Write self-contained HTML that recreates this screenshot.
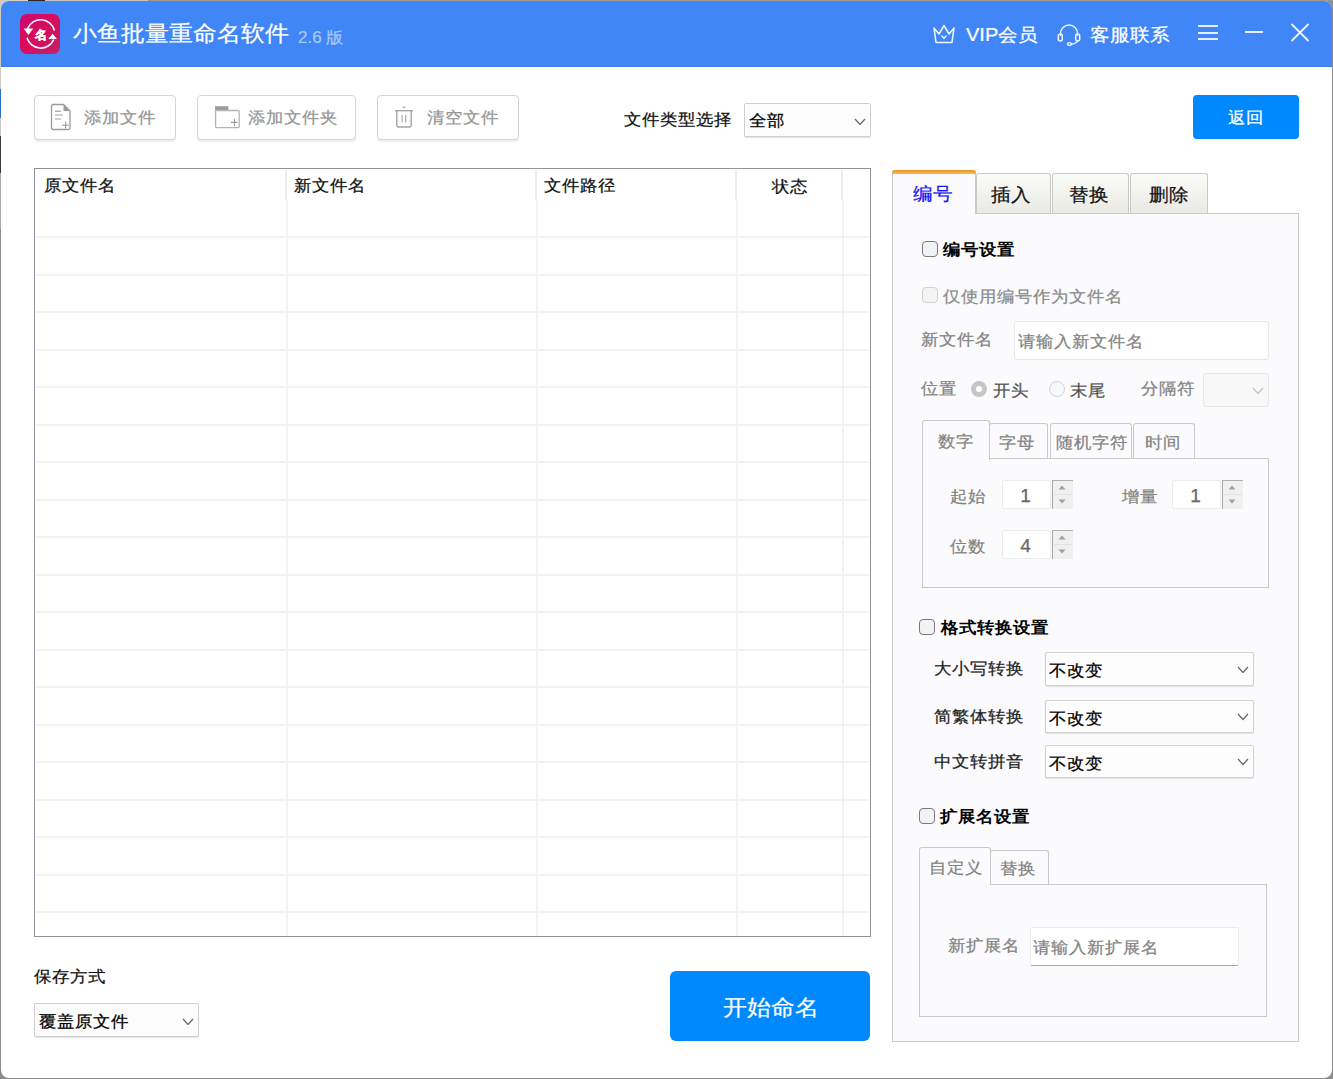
<!DOCTYPE html>
<html><head><meta charset="utf-8"><style>
html,body{margin:0;padding:0;width:1333px;height:1079px;overflow:hidden;background:#8c8c8c;position:relative}
.t{position:absolute;white-space:nowrap;line-height:1;font-family:'Liberation Sans', sans-serif;transform-origin:0 0;-webkit-text-stroke:0.25px currentColor}
</style></head><body>
<div style="position:absolute;left:0;top:0;width:1333px;height:1px;background:#9a9a9a"></div>
<div style="position:absolute;left:0;top:0;width:28px;height:12px;background:#d8d4cc"></div>
<div style="position:absolute;left:28px;top:0;width:17px;height:1px;background:#2a2620"></div>
<div style="position:absolute;left:45px;top:0;width:103px;height:1px;background:#c4c4c4"></div>
<div style="position:absolute;left:0;top:0;width:12px;height:89px;background:#d0ccc4"></div>
<div style="position:absolute;left:0;top:89px;width:1px;height:29px;background:#2a70d0"></div>
<div style="position:absolute;left:0;top:118px;width:1px;height:18px;background:#c8c8c8"></div>
<div style="position:absolute;left:0;top:136px;width:1px;height:37px;background:#3a3a3a"></div>
<div style="position:absolute;left:0;top:173px;width:1px;height:56px;background:#a8a8a8"></div>
<div style="position:absolute;left:1px;top:1px;width:1331px;height:1077px;background:#fff;border-radius:8px;overflow:hidden"></div>
<div style="position:absolute;left:1px;top:1px;width:1331px;height:66px;background:#4086f7;border-radius:8px 8px 0 0"></div>
<div style="position:absolute;left:1px;top:66px;width:1331px;height:1px;background:#3c80f0"></div>
<svg style="position:absolute;left:20px;top:14px" width="40" height="40" viewBox="0 0 40 40">
<defs><linearGradient id="lg" x1="0" y1="0" x2="1" y2="1"><stop offset="0" stop-color="#c60c70"/><stop offset="0.45" stop-color="#da0a5c"/><stop offset="1" stop-color="#c4206c"/></linearGradient></defs>
<rect x="0" y="0" width="40" height="40" rx="7" fill="url(#lg)"/>
<path d="M7.53 14.58 A14.2 14.2 0 0 1 34.48 16.46" fill="none" stroke="#fff" stroke-width="1.6"/>
<path d="M7.01 23.67 A14.2 14.2 0 0 0 33.75 25.49" fill="none" stroke="#fff" stroke-width="1.6"/>
<path d="M3.6 14.6 L13.2 14.6 L8.4 21 Z" fill="#fff"/>
<path d="M28.3 25 L36.9 25 L32.6 19.8 Z" fill="#fff"/>
<text x="20.7" y="24.6" font-size="12" font-weight="bold" fill="#fff" stroke="#fff" stroke-width="0.5" text-anchor="middle" font-family="Liberation Sans, sans-serif">名</text>
</svg>
<div class="t" style="left:73.0px;top:22.5px;font-size:24px;color:#fff;font-weight:normal;transform:scaleY(0.92);">小鱼批量重命名软件</div>
<div class="t" style="left:298.0px;top:29.6px;font-size:17px;color:#a9c8f8;font-weight:normal;transform:scaleY(0.92);">2.6 版</div>
<svg style="position:absolute;left:932px;top:23px" width="24" height="22" viewBox="0 0 24 22">
<path d="M2 5 L7 11 L12 2.5 L17 11 L22 5 L20 19.5 L4 19.5 Z" fill="none" stroke="#eef3fd" stroke-width="1.6" stroke-linejoin="round"/>
<path d="M9.5 12.5 L12 15.5 L14.5 12.5" fill="none" stroke="#eef3fd" stroke-width="1.4"/>
</svg>
<div class="t" style="left:966.0px;top:25.3px;font-size:20px;color:#fff;font-weight:normal;transform:scaleY(0.92);">VIP会员</div>
<svg style="position:absolute;left:1057px;top:23px" width="24" height="23" viewBox="0 0 24 23">
<path d="M3.5 13 V10.5 A8.5 8.5 0 0 1 20.5 10.5 V13" fill="none" stroke="#eef3fd" stroke-width="1.5"/>
<rect x="1.3" y="11" width="4" height="7" rx="2" fill="none" stroke="#eef3fd" stroke-width="1.5"/>
<rect x="18.7" y="11" width="4" height="7" rx="2" fill="none" stroke="#eef3fd" stroke-width="1.5"/>
<path d="M20.5 18 Q19 21 14 21" fill="none" stroke="#eef3fd" stroke-width="1.5"/>
<ellipse cx="12.5" cy="21" rx="2" ry="1.4" fill="none" stroke="#eef3fd" stroke-width="1.4"/>
</svg>
<div class="t" style="left:1090.0px;top:25.3px;font-size:20px;color:#fff;font-weight:normal;transform:scaleY(0.92);">客服联系</div>
<div style="position:absolute;left:1198px;top:25px;width:20px;height:2px;background:#e6edfb"></div>
<div style="position:absolute;left:1198px;top:31.5px;width:20px;height:2.0px;background:#e6edfb"></div>
<div style="position:absolute;left:1198px;top:38px;width:20px;height:2px;background:#e6edfb"></div>
<div style="position:absolute;left:1245px;top:30.5px;width:18px;height:2.0px;background:#e6edfb"></div>
<svg style="position:absolute;left:1289px;top:22px" width="22" height="21" viewBox="0 0 22 21">
<path d="M2.5 2 L19.5 19 M19.5 2 L2.5 19" stroke="#eef3fd" stroke-width="1.8"/></svg>
<div style="position:absolute;left:34px;top:95px;width:142px;height:45px;background:#fff;border:1px solid #d5d5d5;border-radius:4px;box-shadow:0 2px 1px #eeeeee;box-sizing:border-box"></div>
<div style="position:absolute;left:197px;top:95px;width:159px;height:45px;background:#fff;border:1px solid #d5d5d5;border-radius:4px;box-shadow:0 2px 1px #eeeeee;box-sizing:border-box"></div>
<div style="position:absolute;left:377px;top:95px;width:142px;height:45px;background:#fff;border:1px solid #d5d5d5;border-radius:4px;box-shadow:0 2px 1px #eeeeee;box-sizing:border-box"></div>
<svg style="position:absolute;left:50px;top:103px" width="22" height="28" viewBox="0 0 22 28">
<path d="M3 1.5 H13.5 L20 8 V25 A1.5 1.5 0 0 1 18.5 26.5 H3 A1.5 1.5 0 0 1 1.5 25 V3 A1.5 1.5 0 0 1 3 1.5 Z" fill="none" stroke="#9a9a9a" stroke-width="1.3"/>
<path d="M13.5 1.5 V8 H20 Z" fill="#999"/>
<path d="M5 8.2 H11 M5 12 H13 M5 16 H11" stroke="#a0a0a0" stroke-width="1.2"/>
<path d="M15.6 18.6 V25.6 M12.1 22.3 H19.1" stroke="#999" stroke-width="1.1"/>
</svg>
<div class="t" style="left:84.0px;top:109.9px;font-size:17.5px;color:#959595;font-weight:normal;transform:scaleY(0.92);">添加文件</div>
<svg style="position:absolute;left:214px;top:105px" width="28" height="24" viewBox="0 0 28 24">
<rect x="1" y="1.2" width="13.3" height="4.4" fill="#9c9c9c"/>
<path d="M1.6 5.5 H24 A1.2 1.2 0 0 1 25.2 6.7 V21.4 A1.2 1.2 0 0 1 24 22.6 H2.8 A1.2 1.2 0 0 1 1.6 21.4 Z" fill="none" stroke="#b4b4b4" stroke-width="1.3"/>
<path d="M20.4 13.8 V21 M17 17.4 H23.6" stroke="#9a9a9a" stroke-width="1.1"/>
</svg>
<div class="t" style="left:248.0px;top:109.9px;font-size:17.5px;color:#959595;font-weight:normal;transform:scaleY(0.92);">添加文件夹</div>
<svg style="position:absolute;left:393px;top:105px" width="22" height="24" viewBox="0 0 22 24">
<path d="M9.5 2.2 H12.5" stroke="#aaa" stroke-width="1.3"/>
<path d="M2 5.7 H20" stroke="#a5a5a5" stroke-width="1.4"/>
<path d="M3.8 5.7 V20.5 A1.5 1.5 0 0 0 5.3 22 H16.7 A1.5 1.5 0 0 0 18.2 20.5 V5.7" fill="none" stroke="#a5a5a5" stroke-width="1.4"/>
<path d="M9.1 9.9 V17.4 M12.7 9.9 V17.4" stroke="#aaa" stroke-width="1.2"/>
</svg>
<div class="t" style="left:427.0px;top:109.9px;font-size:17.5px;color:#959595;font-weight:normal;transform:scaleY(0.92);">清空文件</div>
<div class="t" style="left:624.0px;top:112.1px;font-size:17.5px;color:#111;font-weight:normal;transform:scaleY(0.92);">文件类型选择</div>
<div style="position:absolute;left:744px;top:103px;width:127px;height:34px;background:#fcfcfc;border:1px solid #cfcfcf;border-radius:2px;box-shadow:0 1px 1px #e4e4e4;box-sizing:border-box"></div>
<div class="t" style="left:749.0px;top:113.4px;font-size:17.5px;color:#000;font-weight:normal;transform:scaleY(0.92);">全部</div>
<svg style="position:absolute;left:854.0px;top:117.5px" width="12" height="7.5"><path d="M1 1 L6.0 6.5 L11 1" fill="none" stroke="#666" stroke-width="1.2"/></svg>
<div style="position:absolute;left:1193px;top:95px;width:106px;height:44px;background:#0088ff;border-radius:4px"></div>
<div class="t" style="left:1228.0px;top:110.1px;font-size:17.5px;color:#fff;font-weight:normal;transform:scaleY(0.92);">返回</div>
<div style="position:absolute;left:34px;top:168px;width:837px;height:769px;background:#fff;border:1px solid #8e929a;box-sizing:border-box"></div>
<div style="position:absolute;left:36px;top:236.0px;width:833px;height:2.0px;background:#f3f3f3"></div>
<div style="position:absolute;left:36px;top:273.5px;width:833px;height:2.0px;background:#f3f3f3"></div>
<div style="position:absolute;left:36px;top:311.0px;width:833px;height:2.0px;background:#f3f3f3"></div>
<div style="position:absolute;left:36px;top:348.5px;width:833px;height:2.0px;background:#f3f3f3"></div>
<div style="position:absolute;left:36px;top:386.0px;width:833px;height:2.0px;background:#f3f3f3"></div>
<div style="position:absolute;left:36px;top:423.5px;width:833px;height:2.0px;background:#f3f3f3"></div>
<div style="position:absolute;left:36px;top:461.0px;width:833px;height:2.0px;background:#f3f3f3"></div>
<div style="position:absolute;left:36px;top:498.5px;width:833px;height:2.0px;background:#f3f3f3"></div>
<div style="position:absolute;left:36px;top:536.0px;width:833px;height:2.0px;background:#f3f3f3"></div>
<div style="position:absolute;left:36px;top:573.5px;width:833px;height:2.0px;background:#f3f3f3"></div>
<div style="position:absolute;left:36px;top:611.0px;width:833px;height:2.0px;background:#f3f3f3"></div>
<div style="position:absolute;left:36px;top:648.5px;width:833px;height:2.0px;background:#f3f3f3"></div>
<div style="position:absolute;left:36px;top:686.0px;width:833px;height:2.0px;background:#f3f3f3"></div>
<div style="position:absolute;left:36px;top:723.5px;width:833px;height:2.0px;background:#f3f3f3"></div>
<div style="position:absolute;left:36px;top:761.0px;width:833px;height:2.0px;background:#f3f3f3"></div>
<div style="position:absolute;left:36px;top:798.5px;width:833px;height:2.0px;background:#f3f3f3"></div>
<div style="position:absolute;left:36px;top:836.0px;width:833px;height:2.0px;background:#f3f3f3"></div>
<div style="position:absolute;left:36px;top:873.5px;width:833px;height:2.0px;background:#f3f3f3"></div>
<div style="position:absolute;left:36px;top:911.0px;width:833px;height:2.0px;background:#f3f3f3"></div>
<div style="position:absolute;left:286px;top:200px;width:2px;height:736px;background:#f3f3f3"></div>
<div style="position:absolute;left:285px;top:170px;width:2px;height:30px;background:#ededed"></div>
<div style="position:absolute;left:536px;top:200px;width:2px;height:736px;background:#f3f3f3"></div>
<div style="position:absolute;left:535px;top:170px;width:2px;height:30px;background:#ededed"></div>
<div style="position:absolute;left:736px;top:200px;width:2px;height:736px;background:#f3f3f3"></div>
<div style="position:absolute;left:735px;top:170px;width:2px;height:30px;background:#ededed"></div>
<div style="position:absolute;left:842px;top:200px;width:2px;height:736px;background:#f3f3f3"></div>
<div style="position:absolute;left:841px;top:170px;width:2px;height:30px;background:#ededed"></div>
<div class="t" style="left:44.0px;top:178.4px;font-size:17.5px;color:#111;font-weight:normal;transform:scaleY(0.92);">原文件名</div>
<div class="t" style="left:294.0px;top:178.4px;font-size:17.5px;color:#111;font-weight:normal;transform:scaleY(0.92);">新文件名</div>
<div class="t" style="left:544.0px;top:178.4px;font-size:17.5px;color:#111;font-weight:normal;transform:scaleY(0.92);">文件路径</div>
<div class="t" style="left:771.5px;top:178.5px;font-size:17.5px;color:#111;font-weight:normal;transform:scaleY(0.92);">状态</div>
<div class="t" style="left:34.0px;top:968.6px;font-size:17.5px;color:#111;font-weight:normal;transform:scaleY(0.92);">保存方式</div>
<div style="position:absolute;left:34px;top:1003px;width:165px;height:34px;background:#fcfcfc;border:1px solid #cfcfcf;border-radius:2px;box-shadow:0 1px 1px #e4e4e4;box-sizing:border-box"></div>
<div class="t" style="left:39.0px;top:1014.0px;font-size:17.5px;color:#000;font-weight:normal;transform:scaleY(0.92);">覆盖原文件</div>
<svg style="position:absolute;left:181.5px;top:1017.5px" width="12" height="7.5"><path d="M1 1 L6.0 6.5 L11 1" fill="none" stroke="#666" stroke-width="1.2"/></svg>
<div style="position:absolute;left:670px;top:971px;width:200px;height:70px;background:#0088ff;border-radius:6px"></div>
<div class="t" style="left:723.0px;top:997.2px;font-size:24px;color:#fff;font-weight:normal;transform:scaleY(0.92);">开始命名</div>
<div style="position:absolute;left:892px;top:213px;width:407px;height:829px;background:#fbfbfd;border:1px solid #c9c9c9;box-sizing:border-box"></div>
<div style="position:absolute;left:976px;top:173px;width:75px;height:40px;background:linear-gradient(#fbfbf9,#e9e9e5);border:1px solid #c9c9c9;border-bottom:none;border-radius:3px 3px 0 0;box-sizing:border-box"></div>
<div style="position:absolute;left:1052px;top:173px;width:77px;height:40px;background:linear-gradient(#fbfbf9,#e9e9e5);border:1px solid #c9c9c9;border-bottom:none;border-radius:3px 3px 0 0;box-sizing:border-box"></div>
<div style="position:absolute;left:1130px;top:173px;width:78px;height:40px;background:linear-gradient(#fbfbf9,#e9e9e5);border:1px solid #c9c9c9;border-bottom:none;border-radius:3px 3px 0 0;box-sizing:border-box"></div>
<div style="position:absolute;left:892px;top:170px;width:84px;height:44px;background:#fbfbfd;border:1px solid #c9c9c9;border-bottom:none;border-top:none;border-radius:3px 3px 0 0;box-sizing:border-box"></div>
<div style="position:absolute;left:892px;top:170px;width:84px;height:3.5px;background:linear-gradient(#e89030,#fcc040);border-radius:3px 3px 0 0"></div>
<div class="t" style="left:913.0px;top:184.1px;font-size:20px;color:#1515f5;font-weight:normal;transform:scaleY(0.92);">编号</div>
<div class="t" style="left:991.0px;top:185.4px;font-size:20px;color:#111;font-weight:normal;transform:scaleY(0.92);">插入</div>
<div class="t" style="left:1069.0px;top:185.4px;font-size:20px;color:#111;font-weight:normal;transform:scaleY(0.92);">替换</div>
<div class="t" style="left:1149.0px;top:185.4px;font-size:20px;color:#111;font-weight:normal;transform:scaleY(0.92);">删除</div>
<div style="position:absolute;left:922px;top:241px;width:16px;height:16px;background:#f2f2f2;border:1.5px solid #7a7a7a;border-radius:4px;box-sizing:border-box"></div>
<div class="t" style="left:943.0px;top:242.2px;font-size:17.5px;color:#000;font-weight:bold;transform:scaleY(0.92);-webkit-text-stroke:0;">编号设置</div>
<div style="position:absolute;left:922px;top:287px;width:16px;height:16px;background:#f4f4f4;border:1.5px solid #d2d2d2;border-radius:4px;box-sizing:border-box"></div>
<div class="t" style="left:943.0px;top:288.6px;font-size:17.5px;color:#8a8a8a;font-weight:normal;transform:scaleY(0.92);">仅使用编号作为文件名</div>
<div class="t" style="left:921.0px;top:332.4px;font-size:17.5px;color:#838383;font-weight:normal;transform:scaleY(0.92);">新文件名</div>
<div style="position:absolute;left:1014px;top:321px;width:255px;height:39px;background:#fff;border:1px solid #e8e8e8;border-radius:3px;box-sizing:border-box"></div>
<div class="t" style="left:1018.0px;top:333.6px;font-size:17.5px;color:#838383;font-weight:normal;transform:scaleY(0.92);">请输入新文件名</div>
<div class="t" style="left:921.0px;top:380.8px;font-size:17.5px;color:#838383;font-weight:normal;transform:scaleY(0.92);">位置</div>
<div style="position:absolute;left:971px;top:381px;width:16px;height:16px;border-radius:50%;box-sizing:border-box;border:5px solid #c6c6c6;background:#fff"></div>
<div class="t" style="left:993.0px;top:383.4px;font-size:17.5px;color:#555;font-weight:normal;transform:scaleY(0.92);">开头</div>
<div style="position:absolute;left:1049px;top:381px;width:16px;height:16px;border-radius:50%;box-sizing:border-box;border:1.3px solid #d2d2d2;background:#f8f8f8"></div>
<div class="t" style="left:1070.0px;top:383.4px;font-size:17.5px;color:#555;font-weight:normal;transform:scaleY(0.92);">末尾</div>
<div class="t" style="left:1141.0px;top:380.9px;font-size:17.5px;color:#838383;font-weight:normal;transform:scaleY(0.92);">分隔符</div>
<div style="position:absolute;left:1203px;top:373px;width:66px;height:34px;background:#f8f8f8;border:1px solid #e6e6e6;border-radius:3px;box-sizing:border-box"></div>
<svg style="position:absolute;left:1251.5px;top:387.2px" width="12" height="7.5"><path d="M1 1 L6.0 6.5 L11 1" fill="none" stroke="#c4c4c4" stroke-width="1.2"/></svg>
<div style="position:absolute;left:922px;top:458px;width:347px;height:130px;background:#fbfbfd;border:1px solid #c9c9c9;box-sizing:border-box"></div>
<div style="position:absolute;left:989px;top:423px;width:59px;height:35px;background:#fbfbfd;border:1px solid #c9c9c9;border-bottom:none;border-radius:3px 3px 0 0;box-sizing:border-box"></div>
<div style="position:absolute;left:1050px;top:423px;width:82px;height:35px;background:#fbfbfd;border:1px solid #c9c9c9;border-bottom:none;border-radius:3px 3px 0 0;box-sizing:border-box"></div>
<div style="position:absolute;left:1133px;top:423px;width:62px;height:35px;background:#fbfbfd;border:1px solid #c9c9c9;border-bottom:none;border-radius:3px 3px 0 0;box-sizing:border-box"></div>
<div style="position:absolute;left:922px;top:420px;width:68px;height:39.5px;background:#fbfbfd;border:1px solid #c9c9c9;border-bottom:none;border-radius:3px 3px 0 0;box-sizing:border-box"></div>
<div class="t" style="left:937.6px;top:433.6px;font-size:17.5px;color:#838383;font-weight:normal;transform:scaleY(0.92);">数字</div>
<div class="t" style="left:999.0px;top:434.7px;font-size:17.5px;color:#838383;font-weight:normal;transform:scaleY(0.92);">字母</div>
<div class="t" style="left:1055.6px;top:434.7px;font-size:17.5px;color:#838383;font-weight:normal;transform:scaleY(0.92);">随机字符</div>
<div class="t" style="left:1145.0px;top:434.7px;font-size:17.5px;color:#838383;font-weight:normal;transform:scaleY(0.92);">时间</div>
<div class="t" style="left:950.0px;top:488.6px;font-size:17.5px;color:#838383;font-weight:normal;transform:scaleY(0.92);">起始</div>
<div style="position:absolute;left:1002px;top:480px;width:49px;height:29px;background:#fff;border:1px solid #ececec;border-radius:2px;box-sizing:border-box"></div>
<div class="t" style="left:1018.5px;top:486.4px;font-size:19px;color:#666;font-weight:normal;transform:scaleY(1);width:14px;text-align:center">1</div>
<div style="position:absolute;left:1052px;top:480px;width:21px;height:29px;background:#f0f0f0;border-left:1.5px solid #a8a8a8;border-top:1.5px solid #b0b0b0;box-sizing:border-box"></div>
<svg style="position:absolute;left:1057px;top:484px" width="10" height="21"><path d="M1.5 5.5 L5 1.5 L8.5 5.5 Z" fill="#a0a0a0"/><path d="M1.5 15.5 L5 19.5 L8.5 15.5 Z" fill="#a0a0a0"/></svg>
<div style="position:absolute;left:1054px;top:494px;width:18px;height:1px;background:#e2e2e2"></div>
<div class="t" style="left:1121.6px;top:488.6px;font-size:17.5px;color:#838383;font-weight:normal;transform:scaleY(0.92);">增量</div>
<div style="position:absolute;left:1172px;top:480px;width:49px;height:29px;background:#fff;border:1px solid #ececec;border-radius:2px;box-sizing:border-box"></div>
<div class="t" style="left:1188.5px;top:486.4px;font-size:19px;color:#666;font-weight:normal;transform:scaleY(1);width:14px;text-align:center">1</div>
<div style="position:absolute;left:1222px;top:480px;width:21px;height:29px;background:#f0f0f0;border-left:1.5px solid #a8a8a8;border-top:1.5px solid #b0b0b0;box-sizing:border-box"></div>
<svg style="position:absolute;left:1227px;top:484px" width="10" height="21"><path d="M1.5 5.5 L5 1.5 L8.5 5.5 Z" fill="#a0a0a0"/><path d="M1.5 15.5 L5 19.5 L8.5 15.5 Z" fill="#a0a0a0"/></svg>
<div style="position:absolute;left:1224px;top:494px;width:18px;height:1px;background:#e2e2e2"></div>
<div class="t" style="left:950.0px;top:539.2px;font-size:17.5px;color:#838383;font-weight:normal;transform:scaleY(0.92);">位数</div>
<div style="position:absolute;left:1002px;top:530px;width:49px;height:29px;background:#fff;border:1px solid #ececec;border-radius:2px;box-sizing:border-box"></div>
<div class="t" style="left:1018.5px;top:536.4px;font-size:19px;color:#666;font-weight:normal;transform:scaleY(1);width:14px;text-align:center">4</div>
<div style="position:absolute;left:1052px;top:530px;width:21px;height:29px;background:#f0f0f0;border-left:1.5px solid #a8a8a8;border-top:1.5px solid #b0b0b0;box-sizing:border-box"></div>
<svg style="position:absolute;left:1057px;top:534px" width="10" height="21"><path d="M1.5 5.5 L5 1.5 L8.5 5.5 Z" fill="#a0a0a0"/><path d="M1.5 15.5 L5 19.5 L8.5 15.5 Z" fill="#a0a0a0"/></svg>
<div style="position:absolute;left:1054px;top:544px;width:18px;height:1px;background:#e2e2e2"></div>
<div style="position:absolute;left:919px;top:619px;width:16px;height:16px;background:#f2f2f2;border:1.5px solid #7a7a7a;border-radius:4px;box-sizing:border-box"></div>
<div class="t" style="left:941.0px;top:619.8px;font-size:17.5px;color:#000;font-weight:bold;transform:scaleY(0.92);-webkit-text-stroke:0;">格式转换设置</div>
<div class="t" style="left:934.0px;top:661.0px;font-size:17.5px;color:#222;font-weight:normal;transform:scaleY(0.92);">大小写转换</div>
<div style="position:absolute;left:1045px;top:652px;width:209px;height:34px;background:#fdfdfd;border:1px solid #d2d2d2;border-radius:2px;box-shadow:0 1px 1px #e0e0e0;box-sizing:border-box"></div>
<div class="t" style="left:1049.0px;top:662.5px;font-size:17.5px;color:#000;font-weight:normal;transform:scaleY(0.92);">不改变</div>
<svg style="position:absolute;left:1237.0px;top:665.8px" width="12" height="7.5"><path d="M1 1 L6.0 6.5 L11 1" fill="none" stroke="#666" stroke-width="1.2"/></svg>
<div class="t" style="left:934.0px;top:709.2px;font-size:17.5px;color:#222;font-weight:normal;transform:scaleY(0.92);">简繁体转换</div>
<div style="position:absolute;left:1045px;top:700px;width:209px;height:33px;background:#fdfdfd;border:1px solid #d2d2d2;border-radius:2px;box-shadow:0 1px 1px #e0e0e0;box-sizing:border-box"></div>
<div class="t" style="left:1049.0px;top:710.7px;font-size:17.5px;color:#000;font-weight:normal;transform:scaleY(0.92);">不改变</div>
<svg style="position:absolute;left:1237.0px;top:713.2px" width="12" height="7.5"><path d="M1 1 L6.0 6.5 L11 1" fill="none" stroke="#666" stroke-width="1.2"/></svg>
<div class="t" style="left:934.0px;top:754.3px;font-size:17.5px;color:#222;font-weight:normal;transform:scaleY(0.92);">中文转拼音</div>
<div style="position:absolute;left:1045px;top:745px;width:209px;height:33px;background:#fdfdfd;border:1px solid #d2d2d2;border-radius:2px;box-shadow:0 1px 1px #e0e0e0;box-sizing:border-box"></div>
<div class="t" style="left:1049.0px;top:755.8px;font-size:17.5px;color:#000;font-weight:normal;transform:scaleY(0.92);">不改变</div>
<svg style="position:absolute;left:1237.0px;top:758.2px" width="12" height="7.5"><path d="M1 1 L6.0 6.5 L11 1" fill="none" stroke="#666" stroke-width="1.2"/></svg>
<div style="position:absolute;left:919px;top:808px;width:16px;height:16px;background:#f2f2f2;border:1.5px solid #7a7a7a;border-radius:4px;box-sizing:border-box"></div>
<div class="t" style="left:940.4px;top:808.7px;font-size:17.5px;color:#000;font-weight:bold;transform:scaleY(0.92);-webkit-text-stroke:0;">扩展名设置</div>
<div style="position:absolute;left:919px;top:884px;width:348px;height:133px;background:#fbfbfd;border:1px solid #c9c9c9;box-sizing:border-box"></div>
<div style="position:absolute;left:990px;top:849.5px;width:59px;height:34.5px;background:#fbfbfd;border:1px solid #c9c9c9;border-bottom:none;border-radius:3px 3px 0 0;box-sizing:border-box"></div>
<div style="position:absolute;left:919px;top:846.7px;width:72px;height:38.799999999999955px;background:#fbfbfd;border:1px solid #c9c9c9;border-bottom:none;border-radius:3px 3px 0 0;box-sizing:border-box"></div>
<div class="t" style="left:929.0px;top:859.9px;font-size:17.5px;color:#838383;font-weight:normal;transform:scaleY(0.92);">自定义</div>
<div class="t" style="left:1000.0px;top:861.3px;font-size:17.5px;color:#838383;font-weight:normal;transform:scaleY(0.92);">替换</div>
<div class="t" style="left:948.0px;top:937.5px;font-size:17.5px;color:#838383;font-weight:normal;transform:scaleY(0.92);">新扩展名</div>
<div style="position:absolute;left:1030px;top:927px;width:209px;height:39px;background:#fff;border:1px solid #ececec;border-bottom:1.5px solid #a8a8a8;border-radius:2px;box-sizing:border-box"></div>
<div class="t" style="left:1033.0px;top:939.9px;font-size:17.5px;color:#838383;font-weight:normal;transform:scaleY(0.92);">请输入新扩展名</div>
</body></html>
